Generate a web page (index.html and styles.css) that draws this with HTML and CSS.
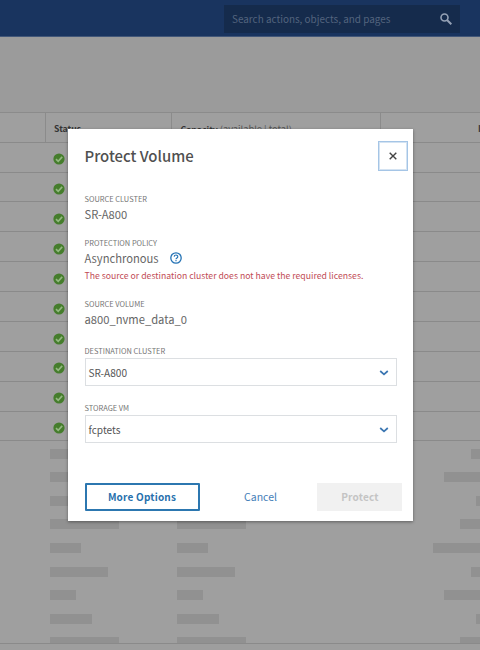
FILE: index.html
```html
<!DOCTYPE html>
<html lang="en">
<head>
<meta charset="utf-8">
<title>Protect Volume</title>
<link rel="stylesheet" href="styles.css">
</head>
<body>
<svg class="defs" width="0" height="0" aria-hidden="true">
  <symbol id="check" viewBox="0 0 12 12"><circle cx="6" cy="6" r="5.6" fill="#457d2c"/><path d="M3 6.2 5.2 8.3 9.2 3.9" fill="none" stroke="#93b880" stroke-width="1.7"/></symbol>
  <symbol id="chevron" viewBox="0 0 10 8"><path d="M1.2 2 5 5.4 8.8 2" fill="none" stroke="#3b76b2" stroke-width="1.7"/></symbol>
</svg>
<div class="page">
  <header class="topbar">
    <div class="search">
      <span>Search actions, objects, and pages</span>
      <svg class="search-icon" viewBox="0 0 12 12"><circle cx="4.5" cy="4.5" r="3.5" fill="none" stroke="#94a1b5" stroke-width="1.6"/><path d="M7 7 11.3 11.3" stroke="#94a1b5" stroke-width="2"/></svg>
    </div>
  </header>
  <main class="content">
    <div class="table-head">
      <div class="th blank"></div>
      <div class="th status">Status</div>
      <div class="th capacity">Capacity <span>(available | total)</span></div>
      <div class="th last">I</div>
    </div>
    <div class="rows">
      <div class="row"><svg><use href="#check"/></svg></div>
      <div class="row"><svg><use href="#check"/></svg></div>
      <div class="row"><svg><use href="#check"/></svg></div>
      <div class="row"><svg><use href="#check"/></svg></div>
      <div class="row"><svg><use href="#check"/></svg></div>
      <div class="row"><svg><use href="#check"/></svg></div>
      <div class="row"><svg><use href="#check"/></svg></div>
      <div class="row"><svg><use href="#check"/></svg></div>
      <div class="row"><svg><use href="#check"/></svg></div>
      <div class="row"><svg><use href="#check"/></svg></div>
    </div>
    <div class="skeletons">
      <div class="sk"><i class="m"></i><i class="m"></i><i class="r1"></i></div>
      <div class="sk"><i class="s"></i><i class="s"></i><i class="r2"></i></div>
      <div class="sk"><i class="n"></i><i class="n"></i><i class="r3"></i></div>
      <div class="sk"><i class="l"></i><i class="l"></i><i class="r4"></i></div>
      <div class="sk"><i class="t"></i><i class="t"></i><i class="r5"></i></div>
      <div class="sk"><i class="m"></i><i class="m"></i><i class="r1"></i></div>
      <div class="sk"><i class="s"></i><i class="s"></i><i class="r2"></i></div>
      <div class="sk"><i class="n"></i><i class="n"></i><i class="r3"></i></div>
      <div class="sk"><i class="l"></i><i class="l"></i><i class="r4"></i></div>
    </div>
  </main>
</div>
<div class="modal" role="dialog">
  <div class="modal-head">
    <h1>Protect Volume</h1>
    <button class="close" aria-label="Close"><svg viewBox="0 0 8 8"><path d="M.7.7 7.3 7.3M7.3.7.7 7.3" stroke="#444" stroke-width="1.4"/></svg></button>
  </div>
  <div class="label">SOURCE CLUSTER</div>
  <div class="value">SR-A800</div>
  <div class="label policy">PROTECTION POLICY</div>
  <div class="value asynchronous"><span>Asynchronous</span><svg class="help" viewBox="0 0 12 12"><circle cx="6" cy="6" r="5.2" fill="none" stroke="#2573b5" stroke-width="1.3"/><path d="M4.2 4.8C4.2 2.5 7.8 2.5 7.8 4.7 7.8 6 6 5.9 6 7.3M6 8.1V9.3" fill="none" stroke="#2573b5" stroke-width="1.1"/></svg></div>
  <div class="error">The source or destination cluster does not have the required licenses.</div>
  <div class="label volume">SOURCE VOLUME</div>
  <div class="value">a800_nvme_data_0</div>
  <div class="label destination">DESTINATION CLUSTER</div>
  <div class="select"><span>SR-A800</span><svg><use href="#chevron"/></svg></div>
  <div class="label storage">STORAGE VM</div>
  <div class="select"><span>fcptets</span><svg><use href="#chevron"/></svg></div>
  <div class="actions">
    <button class="more">More Options</button>
    <button class="cancel">Cancel</button>
    <button class="protect" disabled>Protect</button>
  </div>
</div>
</body>
</html>
```
FILE: styles.css
```css
* { box-sizing: border-box; }
body { margin: 0; width: 480px; height: 650px; overflow: hidden; position: relative; background: #9e9e9e; font-family: "Noto Sans CJK SC", "Noto Sans", sans-serif; color: #555; }
.defs { position: absolute; }
button { font: inherit; padding: 0; margin: 0; border: 0; background: none; }
.page { height: 650px; overflow: hidden; }
.topbar { height: 37px; background: #19345f; border-bottom: 1px solid #425779; padding: 4.5px 20.5px 0 0; display: flex; justify-content: flex-end; }
.search { width: 236px; height: 28px; background: #152b4c; padding: 0 8px 0 8.5px; display: flex; align-items: center; justify-content: space-between; color: #53647e; font-size: 9.93px; line-height: 28px; white-space: nowrap; }
.search-icon { width: 12px; height: 12px; }
.content { padding-top: 75px; background: #9b9b9b; }
.table-head { height: 30.7px; display: flex; border-top: 1px solid #8b8b8b; border-bottom: 1px solid #8a8a8a; background: #9f9f9f; }
.th { font-size: 8.7px; font-weight: 700; line-height: 32px; color: #353535; white-space: nowrap; border-right: 1px solid #8b8b8b; padding-left: 8px; }
.th span { font-weight: 400; color: #555; font-size: 9.3px; }
.th.blank { width: 46px; }
.th.status { width: 126px; }
.th.capacity { width: 208.5px; padding-left: 8.5px; }
.th.last { flex: 1; border: 0; padding-left: 97.5px; overflow: hidden; }
.rows { background: #9f9f9f; }
.row { height: 29.88px; border-bottom: 1px solid #8a8a8a; padding-left: 53px; display: flex; align-items: center; padding-top: 4.4px; }
.row svg { width: 12px; height: 12px; }
.skeletons { background: #9f9f9f; padding-top: 7.4px; height: 202.3px; overflow: hidden; border-bottom: 1px solid #8a8a8a; }
.sk { height: 23.55px; display: grid; grid-template-columns: 127px 254px 50px; padding-left: 49.5px; }
.sk i { height: 10px; background: #919191; }
.l { width: 69px; }
.m { width: 58px; }
.n { width: 42px; }
.t { width: 31.5px; }
.s { width: 26.5px; }
.r1 { margin-left: 40px; }
.r2 { margin-left: 13px; }
.r3 { margin-left: 45px; }
.r4 { margin-left: 29px; }
.r5 { margin-left: 2px; }
.modal { position: absolute; left: 68px; top: 128.5px; width: 345px; height: 392.5px; background: #fff; padding: 12.5px 16.5px 0; box-shadow: 0 1px 3px rgba(0,0,0,.4); display: flex; flex-direction: column; }
.modal-head { height: 50.5px; display: flex; justify-content: space-between; margin-right: -11.5px; }
h1 { margin: 0; font-size: 14.9px; font-weight: 500; line-height: 30px; color: #505050; }
.close { width: 30px; height: 30px; border: 1px solid #a5c5e6; outline: 0; box-shadow: inset 0 0 0 1px #d4e3f2; display: flex; align-items: center; justify-content: center; }
.close svg { width: 8px; height: 8px; }
.label { height: 14px; font-size: 7.45px; line-height: 14px; color: #747474; white-space: nowrap; }
.value { height: 16px; font-size: 11.2px; line-height: 16px; color: #666; }
.policy { margin-top: 14px; }
.asynchronous { display: flex; align-items: center; gap: 11.5px; }
.help { width: 12px; height: 12px; }
.error { height: 19px; font-size: 8.7px; line-height: 20px; color: #c14b55; white-space: nowrap; }
.volume { margin-top: 12.5px; }
.destination { margin-top: 16.5px; }
.select { width: 312px; height: 28.5px; border: 1px solid #dcdfe2; padding: 1px 7px 0 3px; display: flex; align-items: center; justify-content: space-between; font-size: 10.1px; line-height: 27px; color: #555; }
.select svg { width: 10px; height: 8px; margin-top: 1px; }
.storage { margin-top: 14.5px; }
.actions { margin-top: 39.5px; display: flex; align-items: center; font-size: 10px; width: 318px; justify-content: space-between; }
.more { width: 115px; height: 28px; border: 2px solid #2c77b0; border-radius: 1px; color: #2871ad; font-weight: 700; letter-spacing: .2px; }
.cancel { color: #447eb8; font-size: 10.5px; margin-left: 4px; }
.protect { width: 85px; height: 28px; background: #f1f1f1; color: #c4c4c4; font-weight: 700; letter-spacing: .2px; }
```
